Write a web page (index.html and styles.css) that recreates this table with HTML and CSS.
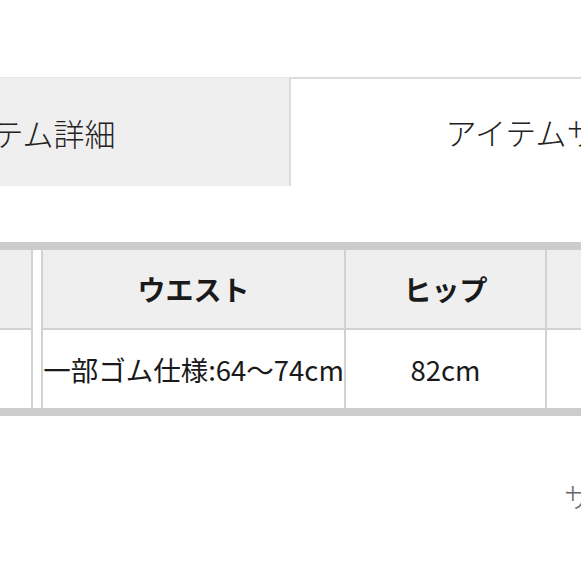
FILE: index.html
```html
<!DOCTYPE html>
<html lang="ja">
<head>
<meta charset="utf-8">
<link rel="stylesheet" href="styles.css">
</head>
<body>
<div class="page">
  <div class="tabs">
    <div class="tab tab-off">アイテム詳細</div>
    <div class="tab tab-on">アイテムサイズ</div>
  </div>
  <div class="size">
    <div class="fixed">
      <div class="cell head">サイズ</div>
      <div class="cell body">F</div>
    </div>
    <div class="grid">
      <div class="cell head">ウエスト</div>
      <div class="cell head">ヒップ</div>
      <div class="cell head">股上</div>
      <div class="cell body">一部ゴム仕様:64〜74cm</div>
      <div class="cell body">82cm</div>
      <div class="cell body">28cm</div>
    </div>
  </div>
  <div class="note">サイズの測り方</div>
</div>
</body>
</html>
```

FILE: styles.css
```css
html, body {
  margin: 0;
  padding: 0;
  background: #fff;
  overflow: hidden;
}
body {
  width: 581px;
  height: 581px;
  font-family: "Noto Sans CJK JP", "Noto Sans", sans-serif;
  color: #333;
}
.page {
  width: 581px;
  overflow: hidden;
  padding-top: 77px;
}
.tabs {
  display: flex;
  margin-left: -241px;
  width: 1060px;
  height: 109px;
}
.tab {
  display: flex;
  align-items: center;
  justify-content: center;
  font-size: 31px;
  font-weight: 300;
  color: #222;
  white-space: nowrap;
  box-sizing: border-box;
}
.tab-off {
  width: 532px;
  background: #efefef;
  border-top: 1px solid #e6e6e6;
  border-right: 2px solid #dcdcdc;
}
.tab-on {
  width: 528px;
  background: #fff;
  border-top: 2px solid #dcdcdc;
  padding-bottom: 2px;
  padding-right: 6px;
}
.size {
  display: flex;
  gap: 8px;
  margin-top: 56px;
  border-top: 8px solid #cccccc;
  border-bottom: 8px solid #cccccc;
  margin-left: -200px;
  width: 1100px;
}
.fixed {
  display: grid;
  grid-template-rows: 78px 78px;
  row-gap: 2px;
  background: #d2d2d2;
  padding-right: 2px;
  width: 231px;
}
.grid {
  display: grid;
  grid-template-columns: 301px 199px 199px;
  grid-template-rows: 78px 78px;
  gap: 2px;
  background: #d2d2d2;
  padding-left: 2px;
}
.cell {
  display: flex;
  align-items: center;
  justify-content: center;
  white-space: nowrap;
  color: #1a1a1a;
  overflow: hidden;
}
.head {
  background: #efefef;
  font-size: 28px;
  font-weight: bold;
}
.body {
  background: #fff;
  font-size: 27.5px;
}
.note {
  margin-top: 64px;
  padding-left: 564px;
  font-size: 28px;
  line-height: 32px;
  font-weight: 300;
  color: #666;
  white-space: nowrap;
}
```
